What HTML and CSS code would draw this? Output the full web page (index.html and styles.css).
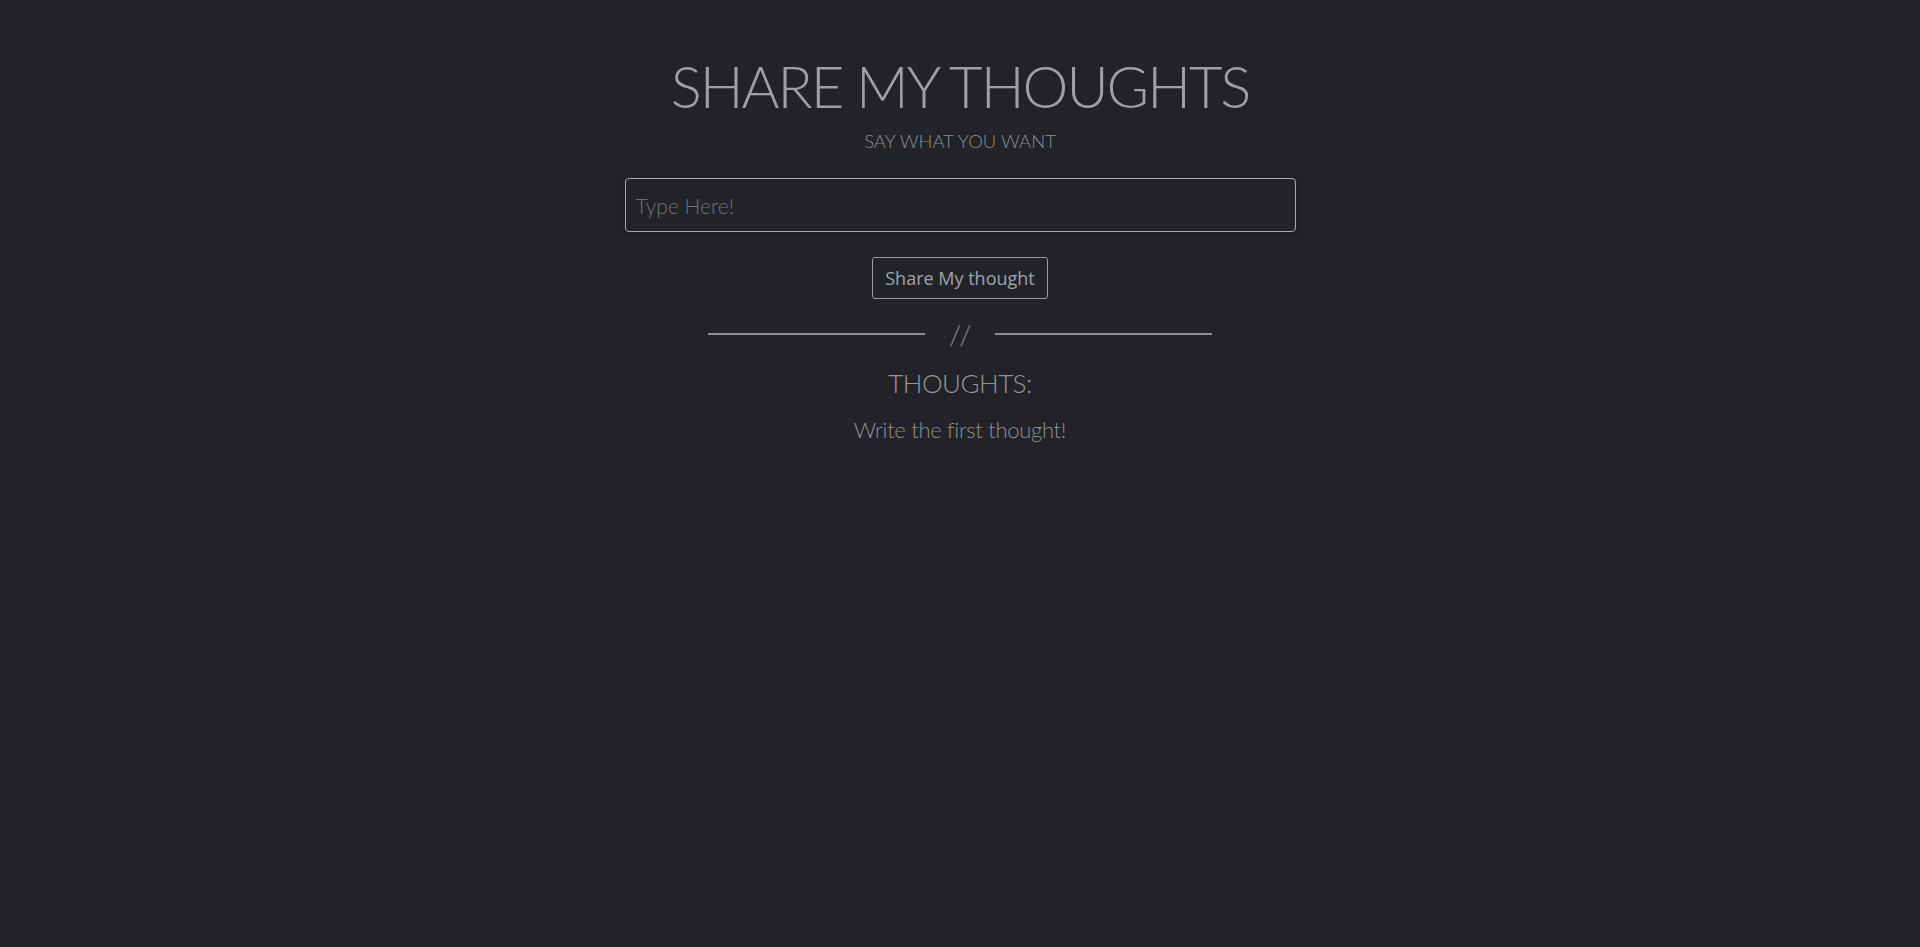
FILE: index.html
```html
<!DOCTYPE html>
<html lang="en">
<head>
<meta charset="utf-8">
<title>Share My Thoughts</title>
<link rel="stylesheet" href="styles.css">
</head>
<body>
<main class="page">
  <header class="head">
    <h1 class="title">SHARE MY THOUGHTS</h1>
    <p class="subtitle">SAY WHAT YOU WANT</p>
  </header>
  <form class="form">
    <input class="field" type="text" placeholder="Type Here!">
    <button class="btn" type="button">Share My thought</button>
  </form>
  <div class="divider">
    <span class="line"></span>
    <span class="slashes">//</span>
    <span class="line"></span>
  </div>
  <section class="thoughts">
    <h2 class="thoughts-title">THOUGHTS:</h2>
    <p class="empty">Write the first thought!</p>
  </section>
</main>
</body>
</html>
```
FILE: styles.css
```css
html, body {
  margin: 0;
  padding: 0;
  background: #222328;
  min-height: 100%;
}
body {
  font-family: "Lato", "Open Sans", sans-serif;
  font-weight: 300;
  color: #9a9a9a;
}
.page {
  display: flex;
  flex-direction: column;
  align-items: center;
  padding-top: 52px;
}
.head {
  display: flex;
  flex-direction: column;
  align-items: center;
}
.title {
  margin: 0;
  font-size: 58px;
  font-weight: 300;
  letter-spacing: -2px;
  line-height: 68px;
  color: #a0a0a0;
}
.subtitle {
  margin: 9px 0 0;
  font-size: 18.5px;
  line-height: 24px;
  color: #8e8e8e;
}
.form {
  display: flex;
  flex-direction: column;
  align-items: center;
  margin-top: 25px;
}
.field {
  box-sizing: border-box;
  width: 671px;
  height: 54px;
  padding: 0 10px;
  background: transparent;
  border: 1px solid #a8a8a8;
  border-radius: 4px;
  font-family: "Lato", sans-serif;
  font-weight: 300;
  font-size: 21px;
  color: #aaa;
  box-shadow: 0 2px 6px rgba(0,0,0,0.25);
  outline: none;
}
.field::placeholder {
  color: #6f7275;
}
.btn {
  box-sizing: border-box;
  margin-top: 25px;
  height: 42px;
  padding: 0 12px;
  background: transparent;
  border: 1px solid #9a9a9a;
  border-radius: 3px;
  font-family: "Open Sans", sans-serif;
  font-weight: 400;
  font-size: 18px;
  color: #9ea3a8;
}
.divider {
  display: flex;
  align-items: center;
  gap: 22px;
  margin-top: 21px;
}
.line {
  width: 217px;
  height: 2px;
  background: #8f8f8f;
}
.slashes {
  width: 26px;
  text-align: center;
  font-size: 28px;
  line-height: 28px;
  letter-spacing: 4px;
  text-indent: 2px;
  color: #8a8a8a;
}
.thoughts {
  display: flex;
  flex-direction: column;
  align-items: center;
}
.thoughts-title {
  margin: 18px 0 0;
  font-size: 26px;
  font-weight: 300;
  letter-spacing: -0.5px;
  line-height: 34px;
  color: #959595;
}
.empty {
  margin: 14px 0 0;
  font-size: 22px;
  letter-spacing: -0.3px;
  line-height: 32px;
  color: #8f8f8f;
}
```
